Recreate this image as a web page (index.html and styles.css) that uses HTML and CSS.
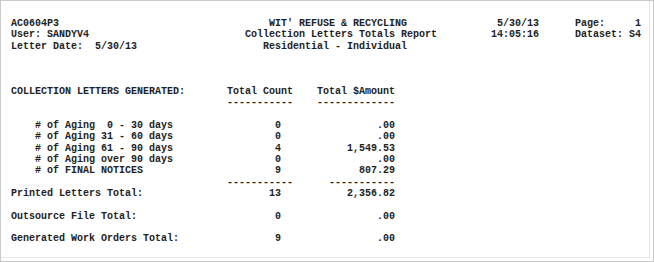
FILE: index.html
```html
<!DOCTYPE html>
<html>
<head>
<meta charset="utf-8">
<link rel="stylesheet" href="styles.css">
</head>
<body>
<div class="frame">
<div class="panel">
<pre class="report">AC0604P3                                   WIT' REFUSE &amp; RECYCLING               5/30/13      Page:     1
User: SANDYV4                          Collection Letters Totals Report         14:05:16      Dataset: S4
Letter Date:  5/30/13                     Residential - Individual



COLLECTION LETTERS GENERATED:       Total Count    Total $Amount
                                    -----------    -------------

    # of Aging  0 - 30 days                 0                .00
    # of Aging 31 - 60 days                 0                .00
    # of Aging 61 - 90 days                 4           1,549.53
    # of Aging over 90 days                 0                .00
    # of FINAL NOTICES                      9             807.29
                                    -----------      -----------
Printed Letters Total:                     13           2,356.82

Outsource File Total:                       0                .00

Generated Work Orders Total:                9                .00</pre>
</div>
</div>
</body>
</html>
```
FILE: styles.css
```css
html, body {
  margin: 0;
  padding: 0;
  background: #ffffff;
}
.frame {
  width: 654px;
  height: 262px;
  box-sizing: border-box;
  border: 1px solid #c9c9c9;
  padding: 0 3px 3px 0;
  background: #ffffff;
}
.panel {
  height: 100%;
  box-sizing: border-box;
  border-right: 1px solid #e6e6e6;
  border-bottom: 1px solid #e6e6e6;
  padding: 17px 0 0 10px;
}
.report {
  margin: 0;
  font-family: "Liberation Mono", "Courier New", monospace;
  font-size: 10px;
  font-weight: bold;
  line-height: 11.33px;
  color: #222222;
}
```
